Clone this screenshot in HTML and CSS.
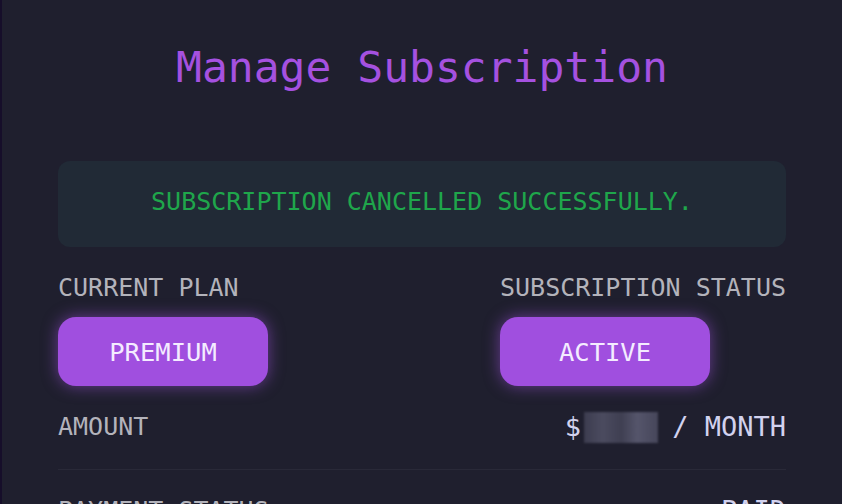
FILE: index.html
```html
<!DOCTYPE html>
<html lang="en">
<head>
<meta charset="utf-8">
<title>Manage Subscription</title>
<link rel="stylesheet" href="styles.css">
</head>
<body>
<main class="page">
  <h1 class="title">Manage Subscription</h1>
  <div class="notice">SUBSCRIPTION CANCELLED SUCCESSFULLY.</div>
  <div class="status-grid">
    <div class="status-col">
      <div class="label">CURRENT PLAN</div>
      <div class="pill">PREMIUM</div>
    </div>
    <div class="status-col">
      <div class="label">SUBSCRIPTION STATUS</div>
      <div class="pill">ACTIVE</div>
    </div>
  </div>
  <div class="detail-row">
    <div class="label">AMOUNT</div>
    <div class="value">$<span class="blurred"></span> / MONTH</div>
  </div>
  <div class="detail-row">
    <div class="label">PAYMENT STATUS</div>
    <div class="value">PAID</div>
  </div>
</main>
</body>
</html>
```
FILE: styles.css
```css
html, body {
  margin: 0;
  padding: 0;
}
body {
  background: #1f1f2e;
  border-left: 2px solid #160e2a;
  font-family: "DejaVu Sans Mono", "Liberation Mono", monospace;
  min-height: 504px;
  box-sizing: border-box;
}
.page {
  width: 728px;
  margin: 0 auto;
  padding-top: 41px;
}
.title {
  margin: 0;
  font-size: 43px;
  line-height: 52px;
  font-weight: normal;
  color: #a551e0;
  text-align: center;
}
.notice {
  margin-top: 68px;
  background: #212a36;
  border-radius: 12px;
  padding: 26px 0 30px;
  font-size: 25px;
  line-height: 30px;
  color: #1fa64b;
  text-align: center;
}
.status-grid {
  margin-top: 26px;
  display: flex;
  justify-content: space-between;
}
.status-col {
  display: flex;
  flex-direction: column;
  align-items: flex-start;
  gap: 14px;
}
.label {
  font-size: 25px;
  line-height: 30px;
  color: #b3b3bb;
}
.pill {
  width: 210px;
  height: 69px;
  border-radius: 18px;
  background: #a04fdf;
  box-shadow: 0 0 16px rgba(165, 85, 230, 0.55);
  color: #f4ecff;
  font-size: 25.5px;
  display: flex;
  align-items: center;
  justify-content: center;
}
.detail-row {
  display: flex;
  justify-content: space-between;
  padding: 26px 0;
  border-bottom: 1px solid #292938;
}
.value {
  font-size: 27px;
  line-height: 30px;
  color: #d2d2ee;
  white-space: pre;
}
.blurred {
  display: inline-block;
  width: 74px;
  height: 31px;
  margin: 0 -2px 0 3px;
  vertical-align: top;
  background: linear-gradient(90deg, #3c3c4f 0%, #4b4b5f 25%, #3f3f52 50%, #55556b 72%, #46465a 100%);
  filter: blur(1px);
}
```
